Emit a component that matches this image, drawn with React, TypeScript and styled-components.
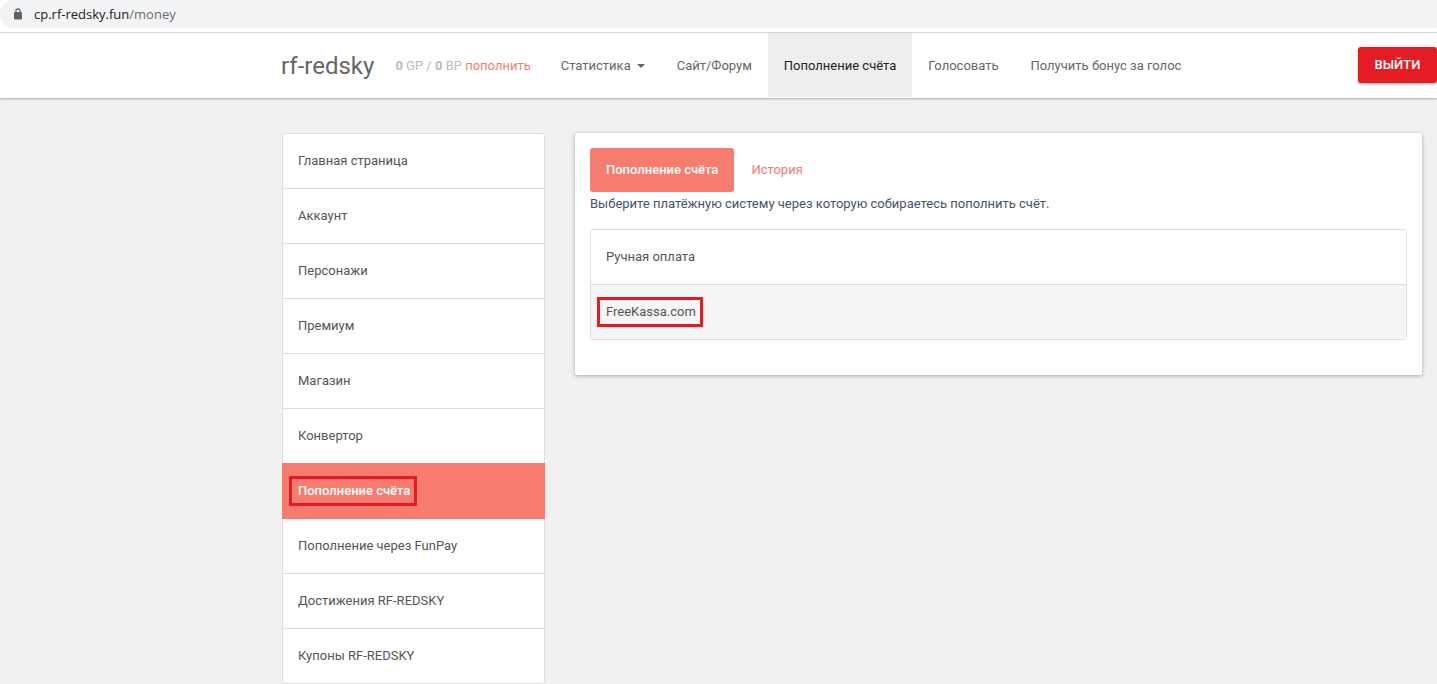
import React from "react";
import styled, { createGlobalStyle, css } from "styled-components";

const GlobalStyle = createGlobalStyle`
  *, *::before, *::after { box-sizing: border-box; }
  body {
    margin: 0;
    background: #f1f1f1;
    color: #555;
    font: 400 13px/20px Roboto, "Liberation Sans", sans-serif;
  }
  a { color: inherit; text-decoration: none; }
  ul { list-style: none; margin: 0; padding: 0; }
`;

const AddressBar = styled.div`
  height: 33px;
  background: #fff;
  border-bottom: 1px solid #d9dadb;
`;

const AddressField = styled.div`
  display: flex;
  align-items: center;
  gap: 11px;
  height: 28px;
  padding-left: 13px;
  border-radius: 14px 0 0 14px;
  background: #f1f3f4;
  color: #6b6e72;
  font: 400 13px/20px "Open Sans", "Noto Sans", sans-serif;
`;

const Host = styled.span`
  color: #202124;
`;

const Header = styled.header`
  display: flex;
  align-items: center;
  height: 65px;
  padding-left: 281px;
  background: #fff;
  box-shadow: 0 1px 2px rgba(0, 0, 0, 0.3);
`;

const Brand = styled.a`
  margin-right: 21px;
  color: #666;
  font-size: 24px;
`;

const Balance = styled.p`
  margin: 0 14px 0 0;
  color: #bbb;
  white-space: nowrap;
`;

const AccentLink = styled.a`
  color: #f67c70;
`;

const Nav = styled.nav`
  display: flex;
  align-self: flex-start;
  flex: 1;
`;

const NavLink = styled.a<{ $active?: boolean }>`
  display: flex;
  align-items: center;
  gap: 6px;
  height: 64px;
  padding: 2px 16px 0;
  white-space: nowrap;
  color: ${(p) => (p.$active ? "#212121" : "#666")};
  background: ${(p) => (p.$active ? "#eee" : "transparent")};
`;

const Caret = styled.span`
  border: 4px solid transparent;
  border-top-color: currentColor;
  border-bottom: 0;
`;

const LogoutButton = styled.button`
  min-width: 79px;
  height: 36px;
  margin-bottom: 1px;
  padding: 0 16px;
  border: 0;
  border-radius: 3px;
  background: #e51c23;
  color: #fff;
  font: 500 13px/20px Roboto, "Liberation Sans", sans-serif;
  text-transform: uppercase;
  box-shadow: 0 1px 3px rgba(0, 0, 0, 0.35);
  cursor: pointer;
`;

const Content = styled.main`
  display: grid;
  grid-template-columns: 263px 1fr;
  align-items: start;
  gap: 30px;
  padding: 35px 15px 0 282px;
`;

const List = styled.ul`
  border: 1px solid #ddd;
  border-radius: 3px;
  background: #fff;
`;

const activeItem = css`
  position: relative;
  margin: -1px;
  padding: 18px 16px;
  background: #f77c70;
  color: #fff;
  font-weight: 500;
`;

const ListLink = styled.a<{ $active?: boolean; $shaded?: boolean }>`
  display: block;
  padding: 17px 15px;
  background: ${(p) => (p.$shaded ? "#f5f5f5" : "transparent")};
  ${(p) => p.$active && activeItem}
`;

const ListItem = styled.li`
  & + & {
    border-top: 1px solid #ddd;
  }
`;

const Marked = styled.span`
  position: relative;
  display: inline-block;
  vertical-align: top;

  &::after {
    content: "";
    position: absolute;
    inset: -5px -7px -5px -9px;
    border: 3px solid #e21b25;
  }
`;

const Card = styled.section`
  padding: 15px 15px 35px;
  border-radius: 2px;
  background: #fff;
  box-shadow: 0 1px 4px rgba(0, 0, 0, 0.3);
`;

const Tabs = styled.nav`
  display: flex;
  gap: 1px;
`;

const Tab = styled.a<{ $active?: boolean }>`
  padding: 12px 16px;
  border-radius: 3px;
  background: ${(p) => (p.$active ? "#f77c70" : "transparent")};
  color: ${(p) => (p.$active ? "#fff" : "#f67c70")};
  font-weight: ${(p) => (p.$active ? 500 : 400)};
`;

const Hint = styled.p`
  margin: 2px 0 15px;
  color: #475363;
`;

type Item = { label: string; active?: boolean; shaded?: boolean; marked?: boolean };

const menu: Item[] = [
  { label: "Главная страница" },
  { label: "Аккаунт" },
  { label: "Персонажи" },
  { label: "Премиум" },
  { label: "Магазин" },
  { label: "Конвертор" },
  { label: "Пополнение счёта", active: true, marked: true },
  { label: "Пополнение через FunPay" },
  { label: "Достижения RF-REDSKY" },
  { label: "Купоны RF-REDSKY" },
];

const methods: Item[] = [
  { label: "Ручная оплата" },
  { label: "FreeKassa.com", shaded: true, marked: true },
];

const LinkList = ({ items }: { items: Item[] }) => (
  <List>
    {items.map((item) => (
      <ListItem key={item.label}>
        <ListLink href="#" $active={item.active} $shaded={item.shaded}>
          {item.marked ? <Marked>{item.label}</Marked> : item.label}
        </ListLink>
      </ListItem>
    ))}
  </List>
);

const LockIcon = () => (
  <svg width="10" height="12" viewBox="0 0 10 12" aria-hidden="true">
    <rect x="1" y="4" width="8" height="7.5" rx="1" fill="#5f6368" />
    <path d="M2.9 4.5V3a2.1 2.1 0 0 1 4.2 0v1.5" fill="none" stroke="#5f6368" strokeWidth="1.2" />
  </svg>
);

export default function App() {
  return (
    <>
      <GlobalStyle />
      <AddressBar>
        <AddressField>
          <LockIcon />
          <span>
            <Host>cp.rf-redsky.fun</Host>/money
          </span>
        </AddressField>
      </AddressBar>
      <Header>
        <Brand href="#">rf-redsky</Brand>
        <Balance>
          <b>0</b> GP / <b>0</b> BP <AccentLink href="#">пополнить</AccentLink>
        </Balance>
        <Nav>
          <NavLink href="#">
            Статистика <Caret />
          </NavLink>
          <NavLink href="#">Сайт/Форум</NavLink>
          <NavLink href="#" $active>
            Пополнение счёта
          </NavLink>
          <NavLink href="#">Голосовать</NavLink>
          <NavLink href="#">Получить бонус за голос</NavLink>
        </Nav>
        <LogoutButton type="button">Выйти</LogoutButton>
      </Header>
      <Content>
        <LinkList items={menu} />
        <Card>
          <Tabs>
            <Tab href="#" $active>
              Пополнение счёта
            </Tab>
            <Tab href="#">История</Tab>
          </Tabs>
          <Hint>Выберите платёжную систему через которую собираетесь пополнить счёт.</Hint>
          <LinkList items={methods} />
        </Card>
      </Content>
    </>
  );
}
